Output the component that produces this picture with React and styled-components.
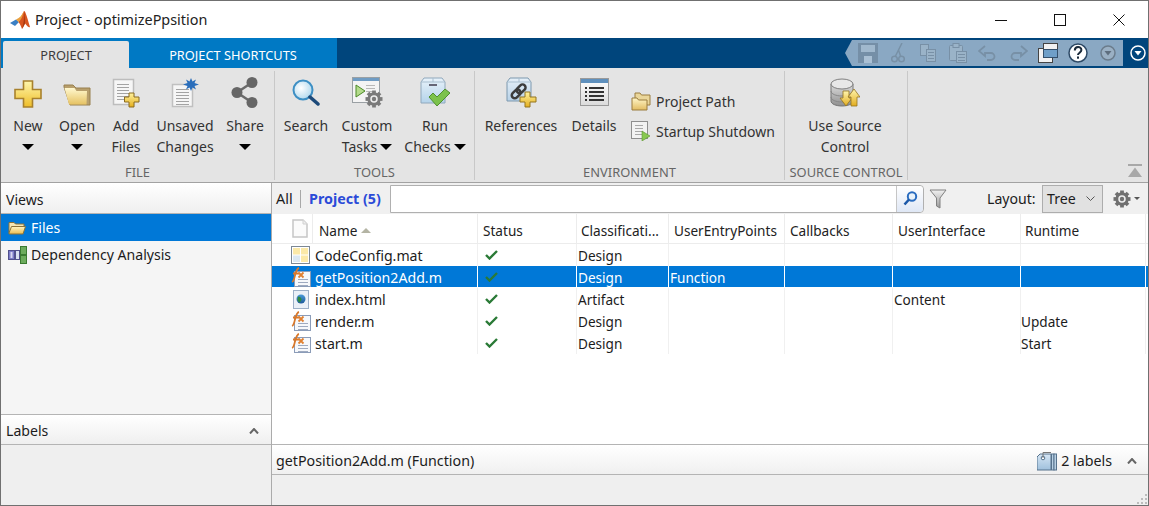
import React from 'react';
import styled, { createGlobalStyle } from 'styled-components';

const GlobalStyle = createGlobalStyle`
  html, body { margin: 0; padding: 0; background: #fff; }
  * { box-sizing: border-box; }
`;

const FONT = '"Noto Sans", "Open Sans", "Liberation Sans", sans-serif';

const Window = styled.div`
  width: 1149px;
  height: 506px;
  display: flex;
  flex-direction: column;
  border: 1px solid #707070;
  font-family: ${FONT};
  font-size: 13.6px;
  color: #1c1c1c;
  overflow: hidden;
`;

const TitleBar = styled.div`
  height: 37px;
  display: flex;
  align-items: center;
  padding-left: 9px;
  background: #fff;
  flex: none;
`;

const TitleText = styled.span`
  margin-left: 5px;
  font-size: 14.4px;
  color: #222;
  flex: 1;
`;

const WinButton = styled.div`
  width: 59px;
  height: 37px;
  display: flex;
  align-items: center;
  justify-content: center;
`;

const TabBar = styled.div`
  height: 30px;
  display: flex;
  background: #00457c;
  flex: none;
`;

const TabStrip = styled.div`
  width: 336px;
  display: flex;
  padding-left: 2px;
  background: #0079c4;
`;

const Tab = styled.div`
  width: ${p => p.$width}px;
  margin-top: ${p => (p.$active ? 3 : 0)}px;
  display: flex;
  align-items: center;
  justify-content: center;
  padding-top: ${p => (p.$active ? 1 : 4)}px;
  font-size: 12.8px;
  color: ${p => (p.$active ? '#3c3c3c' : '#fff')};
  background: ${p => (p.$active ? '#e4e4e4' : 'transparent')};
  border-radius: 2px 2px 0 0;
`;

const QuickBar = styled.div`
  margin: 2px 0 2px auto;
  width: 278px;
  display: flex;
  padding-left: 8px;
  background: #8aa8c3;
  clip-path: polygon(7px 0, 100% 0, 100% 100%, 7px 100%, 0 50%);
`;

const QuickSlot = styled.div`
  width: 30px;
  display: flex;
  align-items: center;
  justify-content: center;
`;

const MenuSlot = styled.div`
  width: 25px;
  padding-left: 4px;
  display: flex;
  align-items: center;
  justify-content: center;
`;

const Ribbon = styled.div`
  height: 115px;
  display: flex;
  background: #e4e4e4;
  border-bottom: 1px solid #a2a2a2;
  flex: none;
`;

const Section = styled.div`
  width: ${p => p.$width}px;
  margin-top: 3px;
  margin-bottom: 2px;
  display: flex;
  flex-direction: column;
  border-right: 1px solid #c8c8c8;
  flex: none;
`;

const SectionBody = styled.div`
  flex: 1;
  display: flex;
  margin-top: -3px;
  padding-left: ${p => p.$pad}px;
`;

const SectionTitle = styled.div`
  height: 17px;
  line-height: 19px;
  text-align: center;
  font-size: 12.9px;
  color: #666;
  white-space: nowrap;
`;

const RibbonButton = styled.div`
  width: ${p => p.$width}px;
  display: flex;
  flex-direction: column;
  align-items: center;
  flex: none;
`;

const IconSlot = styled.div`
  height: 47px;
  padding-bottom: ${p => p.$bottom ?? 7}px;
  display: flex;
  align-items: flex-end;
  justify-content: center;
`;

const Label = styled.div`
  height: 21px;
  line-height: 21px;
  font-size: 14px;
  white-space: nowrap;
  color: #333;
  display: flex;
  align-items: center;
  gap: 3px;
`;

const Caret = styled.span`
  width: 0;
  height: 0;
  border-left: 6px solid transparent;
  border-right: 6px solid transparent;
  border-top: 6px solid #000;
`;

const SmallColumn = styled.div`
  margin-left: 3px;
  padding-top: 18px;
  display: flex;
  flex-direction: column;
`;

const SmallButton = styled.div`
  height: 30px;
  display: flex;
  align-items: center;
  gap: 5px;
  font-size: 14px;
  color: #333;
  white-space: nowrap;
`;

const RibbonEnd = styled.div`
  flex: 1;
  display: flex;
  align-items: flex-end;
  justify-content: flex-end;
  padding: 0 6px 5px 0;
`;

const Main = styled.div`
  flex: 1;
  min-height: 0;
  display: flex;
`;

const LeftPane = styled.div`
  width: 271px;
  display: flex;
  flex-direction: column;
  background: #f5f5f5;
  border-right: 1px solid #ababab;
  font-size: 14.1px;
  flex: none;
`;

const PaneHeader = styled.div`
  height: ${p => p.$height}px;
  padding: 2px ${p => p.$right ?? 5}px 0 5px;
  display: flex;
  align-items: center;
  justify-content: space-between;
  background: linear-gradient(#fff, #efefef);
  border-bottom: 1px solid #b4b4b4;
  border-top: ${p => (p.$ruled ? '1px solid #b4b4b4' : 'none')};
  flex: none;
`;

const ViewList = styled.div`
  flex: 1;
`;

const ViewRow = styled.div`
  height: ${p => p.$height}px;
  padding-left: 7px;
  display: flex;
  align-items: center;
  gap: ${p => p.$gap}px;
  color: ${p => (p.$selected ? '#fff' : '#1c1c1c')};
  background: ${p => (p.$selected ? '#0078d7' : 'transparent')};
`;

const PaneFooter = styled.div`
  height: 60px;
  background: #efefef;
  flex: none;
`;

const RightPane = styled.div`
  flex: 1;
  min-width: 0;
  display: flex;
  flex-direction: column;
`;

const FilterBar = styled.div`
  height: 31px;
  display: flex;
  align-items: center;
  background: #f0f0f0;
  flex: none;
`;

const FilterAll = styled.span`
  width: 29px;
  padding-left: 4px;
  height: 18px;
  line-height: 18px;
  font-size: 14.4px;
  border-right: 1px solid #a8a8a8;
`;

const FilterProject = styled.span`
  margin-left: 8px;
  width: 81px;
  font-size: 14.3px;
  font-weight: 700;
  color: #2b4bd8;
  white-space: nowrap;
`;

const SearchBox = styled.div`
  width: 534px;
  height: 28px;
  display: flex;
  justify-content: flex-end;
  background: #fff;
  border: 1px solid #b0b0b0;
  border-radius: 0 4px 4px 0;
`;

const SearchButton = styled.div`
  width: 27px;
  display: flex;
  align-items: center;
  justify-content: center;
  background: linear-gradient(#fff, #dfe7f5);
  border-left: 1px solid #c6c6c6;
  border-radius: 0 4px 4px 0;
`;

const FunnelSlot = styled.div`
  width: 28px;
  display: flex;
  justify-content: center;
`;

const LayoutLabel = styled.span`
  margin-left: 35px;
  width: 55px;
  font-size: 14.1px;
`;

const Select = styled.div`
  width: 61px;
  height: 28px;
  padding: 0 7px 0 4px;
  display: flex;
  align-items: center;
  justify-content: space-between;
  font-size: 14.2px;
  background: #e1e1e1;
  border: 1px solid #adadad;
`;

const GearSlot = styled.div`
  margin-left: 10px;
  display: flex;
  align-items: center;
  gap: 3px;
`;

const Table = styled.div`
  flex: 1;
  min-height: 0;
  background: #fff;
`;

const columns = '41px 165px 99px 92px 116px 108px 128px 125px';

const HeaderRow = styled.div`
  height: 30px;
  display: grid;
  grid-template-columns: ${columns};
  border-bottom: 1px solid #ececec;
`;

const HeaderCell = styled.div`
  display: flex;
  align-items: center;
  padding-left: ${p => p.$pad ?? 5}px;
  padding-top: 3px;
  gap: 4px;
  border-right: 1px solid #ececec;
  white-space: nowrap;
  color: #222;
`;

const DocCell = styled.div`
  display: flex;
  align-items: center;
  justify-content: center;
  padding-left: 16px;
  border-right: 1px solid #ececec;
`;

const SortMark = styled.span`
  width: 0;
  height: 0;
  border-left: 5px solid transparent;
  border-right: 5px solid transparent;
  border-bottom: 5px solid #b4b4a4;
`;

const BodyRow = styled.div`
  height: 22px;
  display: grid;
  grid-template-columns: ${columns};
  color: ${p => (p.$selected ? '#fff' : '#1c1c1c')};
  background: ${p => (p.$selected ? '#0078d7' : 'transparent')};
  box-shadow: ${p => (p.$selected ? 'inset 0 -1px 0 #fff' : 'none')};
`;

const BodyCell = styled.div`
  display: flex;
  align-items: center;
  padding-left: ${p => p.$pad ?? 1}px;
  border-right: 1px solid ${p => (p.$selected ? '#fff' : '#f0f0f0')};
  white-space: nowrap;
`;

const IconCell = styled.div`
  display: flex;
  align-items: center;
  justify-content: center;
  padding-left: 16px;
`;

const NameCell = styled(BodyCell)`
  font-size: 14.15px;
`;

const StatusBar = styled.div`
  height: 31px;
  padding: 2px 11px 0 4px;
  display: flex;
  align-items: center;
  justify-content: space-between;
  font-size: 14.25px;
  background: linear-gradient(#fff, #f0f0f0);
  border-top: 1px solid #b4b4b4;
  border-bottom: 1px solid #b4b4b4;
  flex: none;
`;

const StatusRight = styled.div`
  display: flex;
  align-items: center;
  gap: 4px;
`;

const StatusChevron = styled.span`
  margin-left: 11px;
  display: flex;
`;

const Footer = styled.div`
  height: 30px;
  display: flex;
  align-items: flex-end;
  justify-content: flex-end;
  background: #efefef;
  flex: none;
`;

// --- drawings ---

const Grad = ({ id, from, to }) => (
  <defs>
    <linearGradient id={id} x1="0" y1="0" x2="0" y2="1">
      <stop offset="0" stopColor={from} />
      <stop offset="1" stopColor={to} />
    </linearGradient>
  </defs>
);

const PLUS = 'M9.5 1h9v8.5H27v9h-8.5V27h-9v-8.5H1v-9h8.5z';

const NewIcon = () => (
  <svg width="28" height="28" viewBox="0 0 28 28">
    <Grad id="plus" from="#fff7ae" to="#eebd28" />
    <path d={PLUS} fill="url(#plus)" stroke="#a8812c" strokeWidth="1.6" />
  </svg>
);

const OpenIcon = () => (
  <svg width="28" height="22" viewBox="0 0 28 22">
    <Grad id="folder" from="#fff8cf" to="#e6c262" />
    <path d="M1 3V1h9l3 3h14v17H7z" fill="#b89f6c" stroke="#98804f" />
    <path d="M1.5 4h10l2 3h10.5l-.5 13.500H6z" fill="url(#folder)" />
  </svg>
);

const DocLines = ({ x, y, w, n, gap = 3, color = '#a3a3a3' }) => (
  <g stroke={color} strokeWidth="1">
    {Array.from({ length: n }, (_, i) => (
      <line key={i} x1={x} x2={x + w} y1={y + i * gap + 0.5} y2={y + i * gap + 0.5} />
    ))}
  </g>
);

const AddFilesIcon = () => (
  <svg width="28" height="30" viewBox="0 0 28 30">
    <Grad id="addplus" from="#fff3a0" to="#e4ae1c" />
    <rect x="1.500" y="1.500" width="20" height="25" fill="#f6f6f6" stroke="#bdbdbd" strokeWidth="1.500" />
    <DocLines x={5} y={6} w={12} n={6} />
    <path d="M17 15h5v4h5v5h-5v5h-5v-5h-4.500v-5H17z" fill="url(#addplus)" stroke="#8a6a1e" />
  </svg>
);

const UnsavedIcon = () => (
  <svg width="28" height="30" viewBox="0 0 28 30">
    <rect x="1.500" y="6.500" width="20" height="22" fill="#f6f6f6" stroke="#c0c0c0" strokeWidth="1.500" />
    <DocLines x={5} y={11} w={13} n={6} />
    <path d="M20 0l1.500 3.500L25 1.500 23.500 5 28 6.500 23.500 8 25 11.500 21.500 9.500 20 13l-1.500-3.500L15 11.500 16.500 8 12 6.500 16.500 5 15 1.500l3.500 2z" fill="#2a6ebb" />
  </svg>
);

const ShareIcon = () => (
  <svg width="28" height="31" viewBox="0 0 28 31">
    <path d="M21 5.500L6 15.500 21 25.500" fill="none" stroke="#6a6a6a" strokeWidth="2.500" />
    <circle cx="21" cy="5.500" r="5.500" fill="#666" />
    <circle cx="6" cy="15.500" r="5.500" fill="#666" />
    <circle cx="21" cy="25.500" r="5.500" fill="#666" />
  </svg>
);

const SearchIcon = () => (
  <svg width="28" height="27" viewBox="0 0 28 27">
    <defs>
      <radialGradient id="lens" cx="0.4" cy="0.4" r="0.7">
        <stop offset="0" stopColor="#fff" />
        <stop offset="1" stopColor="#a8d4ec" />
      </radialGradient>
    </defs>
    <circle cx="11" cy="11" r="9.500" fill="url(#lens)" stroke="#3d8fc4" strokeWidth="2" />
    <path d="M18 18l8 7" stroke="#1d4a7a" strokeWidth="3.500" strokeLinecap="round" />
  </svg>
);

const GearShape = ({ cx, cy, r, fill = '#8c8c8c' }) => (
  <g>
    {[0, 45, 90, 135].map(a => (
      <rect key={a} x={cx - r * 0.22} y={cy - r} width={r * 0.44} height={r * 2} fill={fill} transform={`rotate(${a} ${cx} ${cy})`} />
    ))}
    <circle cx={cx} cy={cy} r={r * 0.78} fill={fill} />
    <circle cx={cx} cy={cy} r={r * 0.44} fill="#eee" />
    <circle cx={cx} cy={cy} r={r * 0.26} fill={fill} />
  </g>
);

const CustomTasksIcon = () => (
  <svg width="31" height="31" viewBox="0 0 31 31">
    <rect x="0.500" y="0.500" width="27" height="25" fill="#f4f4f4" stroke="#9aa0a4" />
    <rect x="1" y="1" width="26" height="3" fill="#6f9cc4" />
    <path d="M4 8l9 6-9 6z" fill="#b4dc8c" stroke="#4d8a28" />
    <DocLines x={14} y={8} w={9} n={3} gap={3} color="#b8b8b8" />
    <GearShape cx={22} cy={22} r={8.500} fill="#7a7a7a" />
  </svg>
);

const RunChecksIcon = () => (
  <svg width="31" height="31" viewBox="0 0 31 31">
    <Grad id="box" from="#e8f2fa" to="#b4d3ea" />
    <path d="M4 1h18l3 4v21H1V5z" fill="url(#box)" stroke="#90a8bc" />
    <path d="M1 5h24M13 1v4" stroke="#a9bfd0" />
    <rect x="9" y="7" width="8" height="2" fill="#667" />
    <path d="M9 20l4-4 4 4 8-8 5 4-13 13z" fill="#7cc24c" stroke="#4f9030" />
  </svg>
);

const ReferencesIcon = () => (
  <svg width="31" height="31" viewBox="0 0 31 31">
    <Grad id="refbox" from="#e6f0f8" to="#b8d2e8" />
    <Grad id="refplus" from="#fff3a0" to="#e4ae1c" />
    <path d="M4 1h18l3 4v19H1V5z" fill="url(#refbox)" stroke="#7c98ae" />
    <path d="M1 5h24M13 1v4" stroke="#a9bfd0" />
    <g fill="none" stroke="#3c3c3c" strokeWidth="2.500" transform="rotate(-45 13 14)">
      <rect x="4" y="11" width="10" height="6" rx="3" />
      <rect x="11" y="11" width="10" height="6" rx="3" />
    </g>
    <path d="M19 15h5v5h6v5h-6v5h-5v-5h-5v-5h5z" fill="url(#refplus)" stroke="#94741f" />
  </svg>
);

const DetailsIcon = () => (
  <svg width="29" height="28" viewBox="0 0 29 28">
    <Grad id="detail" from="#fff" to="#dadada" />
    <rect x="0.500" y="0.500" width="28" height="27" fill="url(#detail)" stroke="#9a9a9a" />
    <rect x="1" y="1" width="27" height="4" fill="#5f90bd" />
    <g fill="#333">
      {[9, 13, 17, 21].map(y => (
        <React.Fragment key={y}>
          <rect x="5" y={y} width="2" height="2" />
          <rect x="9" y={y} width="15" height="2" />
        </React.Fragment>
      ))}
    </g>
  </svg>
);

const ProjectPathIcon = () => (
  <svg width="20" height="19" viewBox="0 0 20 19">
    <Grad id="pfolder" from="#fff6c8" to="#e2bc62" />
    <path d="M4 1h5l1.500 2H19v10H4z" fill="#ead69a" stroke="#9a7d3e" />
    <path d="M1 6h5l1.500 2H16v10H1z" fill="url(#pfolder)" stroke="#9a7d3e" />
  </svg>
);

const StartupIcon = () => (
  <svg width="20" height="20" viewBox="0 0 20 20">
    <rect x="0.500" y="0.500" width="16" height="17" fill="#f2f2f2" stroke="#8e8e8e" />
    <DocLines x={4} y={4} w={8} n={4} color="#a8a8a8" />
    <path d="M11 10l8 5-8 5z" fill="#88c850" stroke="#5a9630" strokeWidth="0.600" />
  </svg>
);

const SourceControlIcon = () => (
  <svg width="30" height="30" viewBox="0 0 30 30">
    <Grad id="db" from="#dcdcdc" to="#8f8f8f" />
    <Grad id="arrow" from="#fff6b0" to="#e2ac1e" />
    <path d="M1 6v17c0 3 5 5 11 5s11-2 11-5V6z" fill="url(#db)" stroke="#777" />
    <ellipse cx="12" cy="6" rx="11" ry="5" fill="#e8e8e8" stroke="#808080" />
    <path d="M1 13c0 3 5 5 11 5s11-2 11-5M1 19c0 3 5 5 11 5s11-2 11-5" fill="none" stroke="#888" />
    <path d="M13 13h6v7h3l-6 8-6-8h3z" fill="url(#arrow)" stroke="#94741f" strokeWidth="0.800" />
    <path d="M24 11l6 8h-3v9h-6v-9h-3z" fill="url(#arrow)" stroke="#94741f" strokeWidth="0.800" />
  </svg>
);

const Dim = styled.svg`
  opacity: ${p => p.$opacity ?? 1};
  transform: ${p => (p.$flip ? 'scaleX(-1)' : 'none')};
`;

const SaveIcon = () => (
  <Dim width="20" height="20" viewBox="0 0 20 20" $opacity={0.38}>
    <path d="M0 0h20v20H0z" fill="#54687a" />
    <rect x="3" y="2" width="14" height="7" fill="#c4d2de" />
    <rect x="6" y="13" width="8" height="7" fill="#e0e8ee" />
  </Dim>
);

const CutIcon = () => (
  <Dim width="14" height="20" viewBox="0 0 14 20" $opacity={0.5}>
    <g fill="none" stroke="#66798a" strokeWidth="1.500">
      <circle cx="3.500" cy="16" r="2.800" />
      <circle cx="10.500" cy="16" r="2.800" />
      <path d="M4.500 13L11 0M9.500 13L7.500 7" />
    </g>
  </Dim>
);

const CopyIcon = () => (
  <Dim width="16" height="18" viewBox="0 0 16 18" $opacity={0.5}>
    <g fill="#a9bdce" stroke="#66798a">
      <rect x="0.500" y="0.500" width="8" height="11" />
      <rect x="6.500" y="5.500" width="9" height="12" />
    </g>
    <DocLines x={8} y={8} w={6} n={3} color="#66798a" />
  </Dim>
);

const PasteIcon = () => (
  <Dim width="18" height="20" viewBox="0 0 18 20" $opacity={0.5}>
    <g fill="#a9bdce" stroke="#66798a">
      <rect x="0.500" y="2.500" width="13" height="15" rx="1" />
      <rect x="4" y="0.500" width="6" height="4" />
      <rect x="7.500" y="8.500" width="10" height="11" />
    </g>
    <DocLines x={9} y={11} w={7} n={3} color="#66798a" />
  </Dim>
);

const UndoIcon = ({ flip }) => (
  <Dim width="20" height="16" viewBox="0 0 20 16" $opacity={0.5} $flip={flip}>
    <path d="M7 1L1 6l6 5V8h6a3.500 3.500 0 010 7H9" fill="none" stroke="#66798a" strokeWidth="1.800" />
  </Dim>
);

const WindowsIcon = () => (
  <svg width="20" height="20" viewBox="0 0 20 20">
    <rect x="0.500" y="5.500" width="14" height="14" fill="#f2f2f2" stroke="#444" />
    <rect x="5.500" y="0.500" width="14" height="6" fill="#f2f2f2" stroke="#444" />
    <rect x="5.500" y="6.500" width="14" height="8" fill="#6f9fc8" stroke="#34506c" />
  </svg>
);

const HelpIcon = () => (
  <svg width="20" height="20" viewBox="0 0 20 20">
    <circle cx="10" cy="10" r="9" fill="#fff" stroke="#2e4a66" strokeWidth="1.500" />
    <path d="M6.800 7.500c0-4.500 6.600-4.500 6.600-.5 0 2.500-3.400 2.800-3.400 5" fill="none" stroke="#1a2a3a" strokeWidth="2" />
    <rect x="9" y="13.500" width="2" height="2.200" fill="#1a2a3a" />
  </svg>
);

const CircleDown = ({ stroke, fill, arrow, size = 16 }) => (
  <svg width={size} height={size} viewBox="0 0 16 16">
    <circle cx="8" cy="8" r="7" fill={fill} stroke={stroke} strokeWidth="1.500" />
    <path d="M4.500 6h7L8 10.500z" fill={arrow} />
  </svg>
);

const CollapseIcon = () => (
  <svg width="14" height="13" viewBox="0 0 14 13">
    <rect width="14" height="2" fill="#a8a8a8" />
    <path d="M7 3.500L14 13H0z" fill="#a8a8a8" />
  </svg>
);

const OpenFolderSmall = () => (
  <svg width="18" height="15" viewBox="0 0 18 15">
    <Grad id="fsm" from="#fff6c4" to="#e8bc50" />
    <path d="M1 13V2.500h5l1.500 1.500H16v3" fill="#f5e7b4" stroke="#8a7238" />
    <path d="M1 13l2.500-6.500H17.500L15 14H1z" fill="url(#fsm)" stroke="#8a7238" />
  </svg>
);

const DependencyIcon = () => (
  <svg width="19" height="18" viewBox="0 0 19 18">
    <rect x="0.500" y="4.500" width="6" height="9" fill="#7c7cc8" stroke="#50508c" />
    <rect x="2.500" y="6" width="2" height="6" fill="#d8d8f0" />
    <rect x="7.500" y="4.500" width="4" height="9" fill="#d8e0f0" stroke="#50508c" />
    <rect x="12.500" y="0.500" width="6" height="8" fill="#6cab5c" stroke="#3a7a30" />
    <rect x="12.500" y="9.500" width="6" height="8" fill="#6cab5c" stroke="#3a7a30" />
  </svg>
);

const HeaderDoc = () => (
  <svg width="16" height="19" viewBox="0 0 16 19">
    <path d="M1 1h10l4 4v13H1z" fill="#fbfbfb" stroke="#c6c6c6" strokeWidth="1.500" />
    <path d="M11 1v4h4" fill="#eee" stroke="#d0d0d0" />
  </svg>
);

const MatIcon = () => (
  <svg width="19" height="18" viewBox="0 0 19 18">
    <rect x="0.500" y="0.500" width="18" height="17" fill="#fff" stroke="#7c8894" />
    <rect x="2" y="2" width="7" height="6.500" fill="#fbe9a8" />
    <rect x="10" y="2" width="7" height="6.500" fill="#fbe9a8" />
    <rect x="2" y="9.500" width="7" height="6.500" fill="#dbe8f2" />
    <rect x="10" y="9.500" width="7" height="6.500" fill="#fbe9a8" />
  </svg>
);

const FxIcon = () => (
  <svg width="20" height="20" viewBox="0 0 20 20">
    <rect x="3.500" y="4.500" width="16" height="15" fill="#f6f8fb" stroke="#8b9cb8" />
    <DocLines x={7} y={12} w={10} n={3} color="#9eaac0" />
    <path d="M1 15C4.500 14 3.500 2 8 1M2 6.500h6" fill="none" stroke="#d9782a" strokeWidth="1.800" />
    <path d="M7.500 5.500l5 5M12.500 5.500l-5 5" stroke="#e08030" strokeWidth="1.800" />
  </svg>
);

const HtmlIcon = () => (
  <svg width="16" height="19" viewBox="0 0 16 19">
    <Grad id="globe" from="#4a9ad8" to="#1c5a9a" />
    <rect x="0.500" y="0.500" width="15" height="18" fill="#eaf0f8" stroke="#9db0c8" />
    <circle cx="8" cy="9" r="4.500" fill="url(#globe)" />
    <path d="M5 6.500c2 0 3 1 3.500 2.500S7 12 6 12.500L4.500 10z" fill="#2e8a40" />
  </svg>
);

const CheckIcon = () => (
  <svg width="13" height="10" viewBox="0 0 13 10">
    <path d="M1 5l3.500 3.500L12 1" fill="none" stroke="#2a7a36" strokeWidth="2.400" />
  </svg>
);

const Funnel = () => (
  <svg width="18" height="20" viewBox="0 0 18 20">
    <Grad id="fun" from="#f0f0f0" to="#9a9a9a" />
    <path d="M1 1h16L11 9v10L7.500 17V9z" fill="url(#fun)" stroke="#808080" />
  </svg>
);

const LoupeIcon = () => (
  <svg width="15" height="15" viewBox="0 0 15 15">
    <circle cx="9" cy="5.500" r="4.200" fill="#eaf3fb" stroke="#2a6cc0" strokeWidth="2" />
    <path d="M6 8.500L1.500 13.500" stroke="#1c58a8" strokeWidth="2.600" />
  </svg>
);

const Chevron = ({ width = 10, height = 6, color = '#666', stroke = 2 }) => (
  <svg width={width} height={height} viewBox="0 0 10 6">
    <path d="M1 5.500L5 1l4 4.500" fill="none" stroke={color} strokeWidth={stroke} />
  </svg>
);

const ChevronDown = () => (
  <svg width="9" height="5" viewBox="0 0 9 5">
    <path d="M0.500 0.500L4.500 4.500l4-4" fill="none" stroke="#555" />
  </svg>
);

const GearSmall = () => (
  <svg width="18" height="18" viewBox="0 0 18 18">
    <GearShape cx={9} cy={9} r={8.500} fill="#707070" />
  </svg>
);

const TagsIcon = () => (
  <svg width="20" height="20" viewBox="0 0 20 20">
    <Grad id="tag" from="#d6e6f4" to="#9fc0dc" />
    <path d="M3 3h11v16H0V6z" fill="url(#tag)" stroke="#56728c" />
    <rect x="14.500" y="3" width="2.500" height="16" fill="#b8d0e4" stroke="#56728c" />
    <rect x="17" y="3" width="2.500" height="16" fill="#b8d0e4" stroke="#56728c" />
    <circle cx="6" cy="7" r="1.800" fill="#fff" stroke="#56728c" />
    <path d="M6 7V1.500h8" fill="none" stroke="#777" />
  </svg>
);

const Grip = () => (
  <svg width="12" height="12" viewBox="0 0 12 12">
    <g fill="#bcbcbc">
      <rect x="9" y="1" width="2" height="2" />
      <rect x="5" y="5" width="2" height="2" />
      <rect x="9" y="5" width="2" height="2" />
      <rect x="1" y="9" width="2" height="2" />
      <rect x="5" y="9" width="2" height="2" />
      <rect x="9" y="9" width="2" height="2" />
    </g>
  </svg>
);

const MatlabLogo = () => (
  <svg width="20" height="20" viewBox="0 0 20 20">
    <path d="M0 13l6-3.500L9 12l-4 4z" fill="#3a7fc4" />
    <path d="M8.500 12L14 1c1.500 0 3 6 6 16-2 1-3.500-2-5-3.500-1 2.500-2 4.500-3 5.500-1-3-2-5-3.500-7z" fill="#d9541e" />
    <path d="M14 1c-2 4-4 7-8 8.500L8.500 12C11 10 13 6 14 1z" fill="#e9a040" />
    <path d="M14 1c1 5 1 9 1 12.500L12 19c1.500-5 2.500-11 2-18z" fill="#a83a10" />
  </svg>
);

const Minimize = () => (
  <svg width="12" height="12" viewBox="0 0 12 12"><path d="M0 6.500h12" stroke="#111" /></svg>
);

const Maximize = () => (
  <svg width="12" height="12" viewBox="0 0 12 12"><rect x="0.500" y="0.500" width="11" height="11" fill="none" stroke="#111" /></svg>
);

const CloseGlyph = () => (
  <svg width="12" height="12" viewBox="0 0 12 12"><path d="M0.500 0.500l11 11M11.500 0.500l-11 11" stroke="#111" /></svg>
);

// --- data ---

const rows = [
  { name: 'CodeConfig.mat', icon: <MatIcon />, cls: 'Design' },
  { name: 'getPosition2Add.m', icon: <FxIcon />, cls: 'Design', entry: 'Function', selected: true },
  { name: 'index.html', icon: <HtmlIcon />, cls: 'Artifact', ui: 'Content' },
  { name: 'render.m', icon: <FxIcon />, cls: 'Design', runtime: 'Update' },
  { name: 'start.m', icon: <FxIcon />, cls: 'Design', runtime: 'Start' },
];

const headers = [
  { text: 'Status', pad: 5 },
  { text: 'Classificati...', pad: 4 },
  { text: 'UserEntryPoints', pad: 5 },
  { text: 'Callbacks', pad: 5 },
  { text: 'UserInterface', pad: 5 },
  { text: 'Runtime', pad: 4 },
];

const BigButton = ({ width, icon, lines, caret, inlineCaret, bottom }) => (
  <RibbonButton $width={width}>
    <IconSlot $bottom={bottom}>{icon}</IconSlot>
    {lines.map((line, i) => (
      <Label key={line}>
        {line}
        {inlineCaret && i === lines.length - 1 && <Caret />}
      </Label>
    ))}
    {caret && (
      <Label>
        <Caret />
      </Label>
    )}
  </RibbonButton>
);

export default function App() {
  return (
    <Window>
      <GlobalStyle />
      <TitleBar>
        <MatlabLogo />
        <TitleText>Project - optimizePpsition</TitleText>
        <WinButton><Minimize /></WinButton>
        <WinButton><Maximize /></WinButton>
        <WinButton><CloseGlyph /></WinButton>
      </TitleBar>

      <TabBar>
        <TabStrip>
          <Tab $width={126} $active>PROJECT</Tab>
          <Tab $width={208}>PROJECT SHORTCUTS</Tab>
        </TabStrip>
        <QuickBar>
          <QuickSlot><SaveIcon /></QuickSlot>
          <QuickSlot><CutIcon /></QuickSlot>
          <QuickSlot><CopyIcon /></QuickSlot>
          <QuickSlot><PasteIcon /></QuickSlot>
          <QuickSlot><UndoIcon /></QuickSlot>
          <QuickSlot><UndoIcon flip /></QuickSlot>
          <QuickSlot><WindowsIcon /></QuickSlot>
          <QuickSlot><HelpIcon /></QuickSlot>
          <QuickSlot><CircleDown stroke="#6b7c8c" fill="#9ab0c4" arrow="#5e6e7e" /></QuickSlot>
        </QuickBar>
        <MenuSlot><CircleDown stroke="#fff" fill="#00457c" arrow="#fff" /></MenuSlot>
      </TabBar>

      <Ribbon>
        <Section $width={274}>
          <SectionBody $pad={3}>
            <BigButton width={48} icon={<NewIcon />} lines={['New']} caret />
            <BigButton width={50} icon={<OpenIcon />} lines={['Open']} caret bottom={9} />
            <BigButton width={48} icon={<AddFilesIcon />} lines={['Add', 'Files']} />
            <BigButton width={70} icon={<UnsavedIcon />} lines={['Unsaved', 'Changes']} />
            <BigButton width={50} icon={<ShareIcon />} lines={['Share']} caret />
          </SectionBody>
          <SectionTitle>FILE</SectionTitle>
        </Section>
        <Section $width={200}>
          <SectionBody $pad={5}>
            <BigButton width={52} icon={<SearchIcon />} lines={['Search']} bottom={9} />
            <BigButton width={70} icon={<CustomTasksIcon />} lines={['Custom', 'Tasks']} inlineCaret />
            <BigButton width={66} icon={<RunChecksIcon />} lines={['Run', 'Checks']} inlineCaret />
          </SectionBody>
          <SectionTitle>TOOLS</SectionTitle>
        </Section>
        <Section $width={310}>
          <SectionBody $pad={7}>
            <BigButton width={78} icon={<ReferencesIcon />} lines={['References']} />
            <BigButton width={68} icon={<DetailsIcon />} lines={['Details']} bottom={9} />
            <SmallColumn>
              <SmallButton><ProjectPathIcon />Project Path</SmallButton>
              <SmallButton><StartupIcon />Startup Shutdown</SmallButton>
            </SmallColumn>
          </SectionBody>
          <SectionTitle>ENVIRONMENT</SectionTitle>
        </Section>
        <Section $width={123}>
          <SectionBody $pad={0}>
            <BigButton width={120} icon={<SourceControlIcon />} lines={['Use Source', 'Control']} />
          </SectionBody>
          <SectionTitle>SOURCE CONTROL</SectionTitle>
        </Section>
        <RibbonEnd><CollapseIcon /></RibbonEnd>
      </Ribbon>

      <Main>
        <LeftPane>
          <PaneHeader $height={31}>Views</PaneHeader>
          <ViewList>
            <ViewRow $selected $height={27} $gap={5}><OpenFolderSmall />Files</ViewRow>
            <ViewRow $height={27} $gap={4}><DependencyIcon />Dependency Analysis</ViewRow>
          </ViewList>
          <PaneHeader $height={31} $right={12} $ruled>
            Labels
            <Chevron />
          </PaneHeader>
          <PaneFooter />
        </LeftPane>

        <RightPane>
          <FilterBar>
            <FilterAll>All</FilterAll>
            <FilterProject>Project (5)</FilterProject>
            <SearchBox>
              <SearchButton><LoupeIcon /></SearchButton>
            </SearchBox>
            <FunnelSlot><Funnel /></FunnelSlot>
            <LayoutLabel>Layout:</LayoutLabel>
            <Select>
              Tree
              <ChevronDown />
            </Select>
            <GearSlot>
              <GearSmall />
              <svg width="6" height="3" viewBox="0 0 6 3"><path d="M0 0h6L3 3z" fill="#555" /></svg>
            </GearSlot>
          </FilterBar>

          <Table>
            <HeaderRow>
              <DocCell><HeaderDoc /></DocCell>
              <HeaderCell $pad={6}>Name<SortMark /></HeaderCell>
              {headers.map(h => <HeaderCell key={h.text} $pad={h.pad}>{h.text}</HeaderCell>)}
            </HeaderRow>
            {rows.map(r => (
              <BodyRow key={r.name} $selected={r.selected}>
                <IconCell>{r.icon}</IconCell>
                <NameCell $pad={2} $selected={r.selected}>{r.name}</NameCell>
                <BodyCell $pad={7} $selected={r.selected}><CheckIcon /></BodyCell>
                <BodyCell $selected={r.selected}>{r.cls}</BodyCell>
                <BodyCell $selected={r.selected}>{r.entry}</BodyCell>
                <BodyCell $selected={r.selected} />
                <BodyCell $selected={r.selected}>{r.ui}</BodyCell>
                <BodyCell $pad={0} $selected={r.selected}>{r.runtime}</BodyCell>
              </BodyRow>
            ))}
          </Table>

          <StatusBar>
            getPosition2Add.m (Function)
            <StatusRight>
              <TagsIcon />
              2 labels
              <StatusChevron><Chevron /></StatusChevron>
            </StatusRight>
          </StatusBar>
          <Footer><Grip /></Footer>
        </RightPane>
      </Main>
    </Window>
  );
}
